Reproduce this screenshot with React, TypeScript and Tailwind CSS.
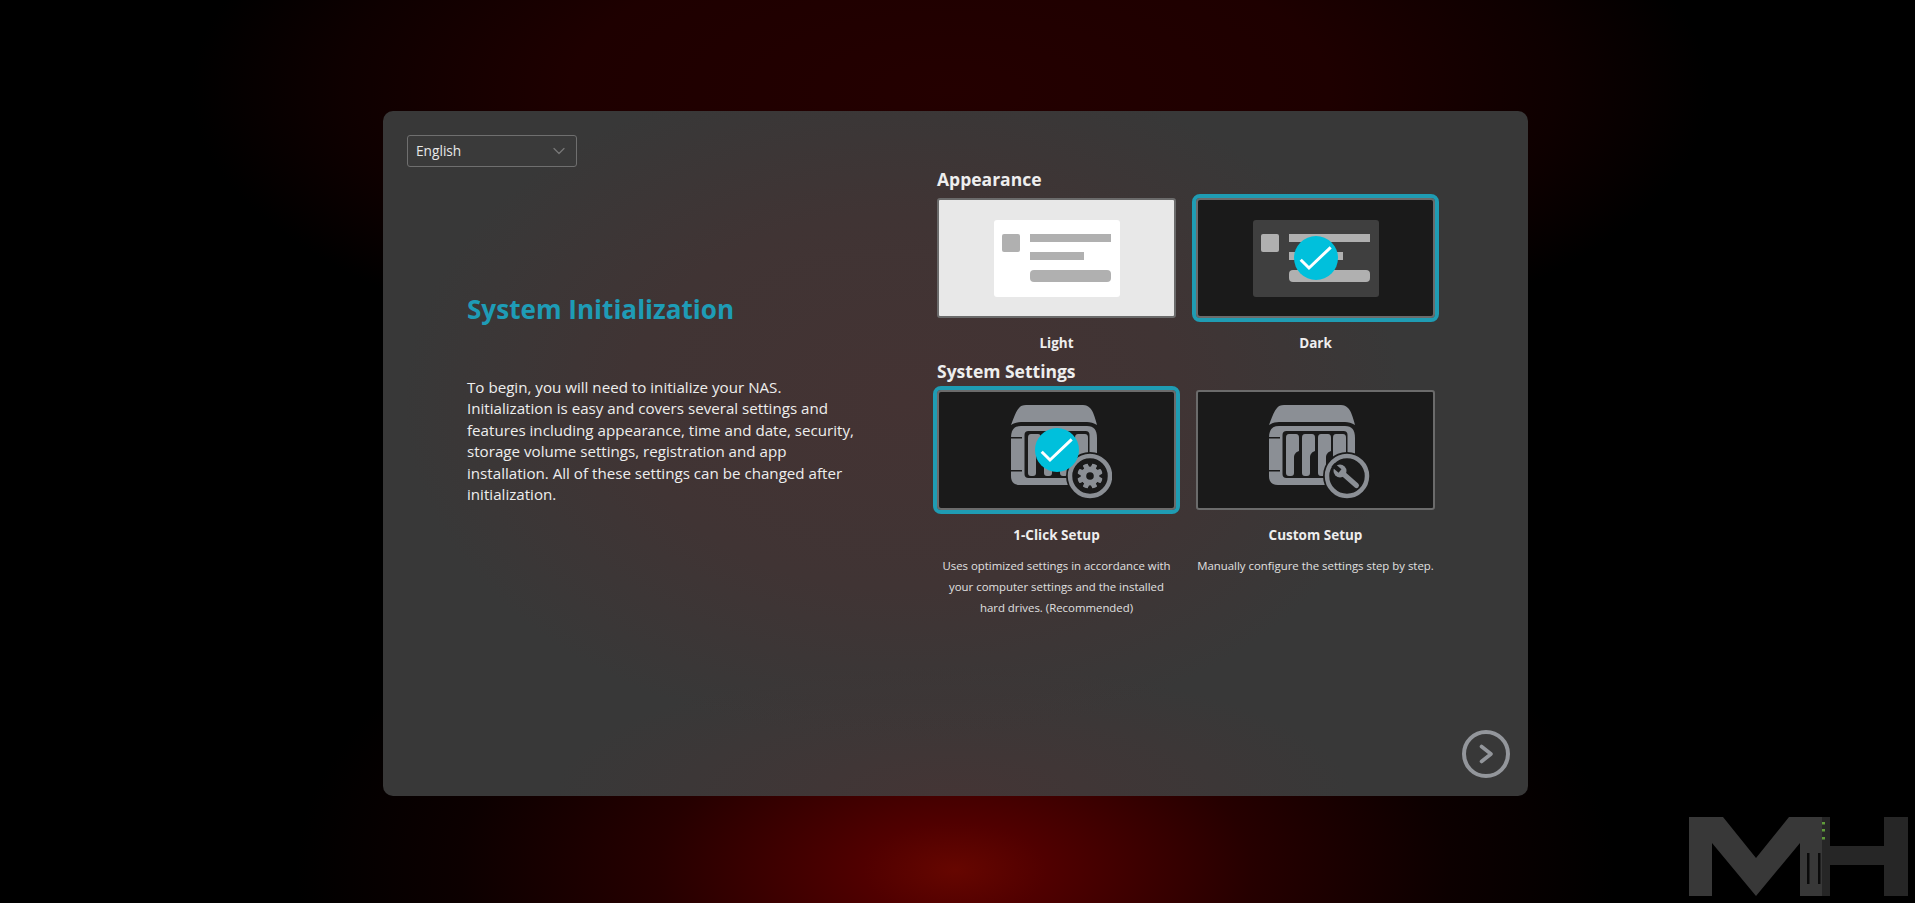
import React from 'react';
import { ChevronDown } from 'lucide-react';

const font = { fontFamily: '"Open Sans", "Noto Sans", sans-serif' };

const CheckBadge = () => (
  <div className="absolute left-1/2 top-1/2 -translate-x-1/2 -translate-y-1/2 w-11 h-11 rounded-full bg-[#00c0dc]">
    <svg width="44" height="44" viewBox="0 0 44 44" fill="none">
      <path d="M6.7 23.7L15 32L36.7 11.3" stroke="#fff" strokeWidth="3" />
    </svg>
  </div>
);

const MiniCard = ({ dark }: { dark?: boolean }) => {
  const bar = 'bg-[#b0b0b0]';
  return (
    <div className={`w-[126px] h-[77px] rounded-[3px] flex pl-2 pt-3.5 ${dark ? 'bg-[#3f3f3f]' : 'bg-white'}`}>
      <div className={`w-[18px] h-[18px] rounded-[2px] ${bar}`} />
      <div className="ml-2.5 flex flex-col">
        <div className={`w-[81px] h-2 ${bar}`} />
        <div className={`w-[54px] h-2 mt-2.5 ${bar}`} />
        <div className={`w-[81px] h-3 mt-2.5 rounded-[4px] ${bar}`} />
      </div>
    </div>
  );
};

const NasIcon = ({ tool }: { tool: 'gear' | 'wrench' }) => {
  const gray = '#8b8f95';
  const dark = '#1a1a1a';
  const cx = tool === 'gear' ? 88 : 92;
  const cy = 86;
  const bays = [31, 47, 63, 78];
  const vw = tool === 'gear' ? 110 : 122;
  return (
    <svg width={vw} height="120" viewBox={`0 0 ${vw} 120`}>
      <g transform={tool === 'gear' ? 'translate(-5 0)' : undefined}>
        <path d="M14 35C17 27 19 21 22 18C23 16 26 15 29 15H86C89 15 91 16 93 18C96 21 98 27 100 35C97 33 93 32 90 32H24C21 32 17 33 14 35Z" fill={gray} />
        <path d="M14 48V86C14 92 17 95 23 95H91C97 95 100 92 100 86V48C100 40 97 36 90 36H24C17 36 14 40 14 48Z" fill={gray} />
        <rect x="14" y="47" width="11" height="1.5" fill={dark} />
        <rect x="14" y="80" width="11" height="1.5" fill={dark} />
        <rect x="27.5" y="41" width="65" height="47" rx="4" fill={dark} />
        {bays.map((x, i) => (
          <path
            key={x}
            d={i === 3
              ? `M${x} 48C${x} 45 ${x + 1} 44 ${x + 3} 44H${x + 10}C${x + 12} 44 ${x + 13} 45 ${x + 13} 48V70H${x}Z`
              : `M${x} 48C${x} 45 ${x + 1} 44 ${x + 3} 44H${x + 10}C${x + 12} 44 ${x + 13} 45 ${x + 13} 48V61C${x + 10} 62 ${x + 8} 64 ${x + 8} 68V83C${x + 8} 85 ${x + 7} 86 ${x + 5} 86H${x + 3}C${x + 1} 86 ${x} 85 ${x} 83Z`}
            fill={gray}
          />
        ))}
      </g>
      <circle cx={cx} cy={cy} r="24" fill={dark} />
      <circle cx={cx} cy={cy} r="20" fill={dark} stroke={gray} strokeWidth="4.5" />
      {tool === 'gear' ? (
        <g fill={gray}>
          {[0, 45, 90, 135, 180, 225, 270, 315].map((a) => (
            <rect key={a} x={cx - 2.5} y={cy - 12.5} width="5" height="25" rx="1" transform={`rotate(${a + 22.5} ${cx} ${cy})`} />
          ))}
          <circle cx={cx} cy={cy} r="9.5" />
          <circle cx={cx} cy={cy} r="3.8" fill={dark} />
        </g>
      ) : (
        <g>
          <path d={`M${cx - 7} ${cy - 5}L${cx + 9.5} ${cy + 9.5}`} stroke={gray} strokeWidth="5" strokeLinecap="round" />
          <circle cx={cx - 7} cy={cy - 5} r="6.5" fill={gray} />
          <path d={`M${cx - 7} ${cy - 5}L${cx - 14} ${cy - 11}`} stroke={dark} strokeWidth="4.5" />
        </g>
      )}
    </svg>
  );
};

const OptionCard = ({ selected, light, children }: { selected?: boolean; light?: boolean; children: React.ReactNode }) => (
  <div
    className={`relative w-[239px] h-[120px] border-2 border-[#6b6b6b] flex items-center justify-center ${
      light ? 'bg-[#e8e8e8]' : 'bg-[#1a1a1a]'
    } ${selected ? 'rounded-[4px] outline-4 outline-[#1f9cb3]' : 'rounded-[3px]'}`}
  >
    {children}
    {selected && <CheckBadge />}
  </div>
);

const Label = ({ children }: { children: React.ReactNode }) => (
  <div className="mt-[15px] text-[13.5px] leading-5 font-bold text-[#eeeeee] text-center">{children}</div>
);

const Heading = ({ children }: { children: React.ReactNode }) => (
  <h2 className="text-[17.5px] leading-6 font-bold text-[#eeeeee]">{children}</h2>
);

export default function App() {
  return (
    <div
      className="relative w-full h-[903px] overflow-hidden pl-[383px] pt-[111px] bg-black bg-[radial-gradient(ellipse_660px_340px_at_955px_870px,#660600_0%,#500000_14%,#260000_45%,#0c0000_75%,transparent_100%),radial-gradient(ellipse_760px_300px_at_950px_90px,#240000_0%,#1e0000_50%,#0e0000_80%,transparent_100%)]"
      style={font}
    >
      <div className="relative w-[1145px] h-[685px] rounded-[10px] bg-[#383838] bg-[radial-gradient(ellipse_500px_340px_at_520px_290px,#443333_0%,#403434_55%,transparent_100%),radial-gradient(ellipse_400px_130px_at_570px_685px,#443535_0%,transparent_100%)] text-white">
        <div className="absolute left-6 top-6 w-[170px] h-8 rounded-[3px] border border-[#6f6f6f] bg-[#3a3a3a] flex items-center justify-between pl-2 pr-[7px] text-[13.7px] text-[#e8e8e8]">
          <span className="pt-px">English</span>
          <ChevronDown size={20} strokeWidth={1.5} className="text-[#777777]" />
        </div>

        <div className="flex">
          <div className="w-[470px] ml-[84px] pt-[180px]">
            <h1 className="text-[26.1px] leading-9 font-bold text-[#1e9cb6]">System Initialization</h1>
            <p className="mt-[50px] w-[395px] text-[15.15px] leading-[21.4px] text-[#eeeeee]">
              To begin, you will need to initialize your NAS. Initialization is easy and covers several settings and
              features including appearance, time and date, security, storage volume settings, registration and app
              installation. All of these settings can be changed after initialization.
            </p>
          </div>

          <div className="pt-14">
            <Heading>Appearance</Heading>
            <div className="grid grid-cols-[239px_239px] gap-x-5 mt-[7px]">
              <OptionCard light><MiniCard /></OptionCard>
              <OptionCard selected><MiniCard dark /></OptionCard>
              <Label>Light</Label>
              <Label>Dark</Label>
            </div>
            <div className="mt-1.5"><Heading>System Settings</Heading></div>
            <div className="grid grid-cols-[239px_239px] gap-x-5 mt-[7px]">
              <OptionCard selected><NasIcon tool="gear" /></OptionCard>
              <OptionCard><NasIcon tool="wrench" /></OptionCard>
              <Label>1-Click Setup</Label>
              <Label>Custom Setup</Label>
              <p className="mt-2.5 text-[11.4px] leading-[21px] text-[#e0e0e0] text-center">
                Uses optimized settings in accordance with your computer settings and the installed hard drives. (Recommended)
              </p>
              <p className="mt-2.5 text-[11.4px] leading-[21px] text-[#e0e0e0] text-center whitespace-nowrap">
                Manually configure the settings step by step.
              </p>
            </div>
          </div>
        </div>

        <button aria-label="Next" className="absolute right-[18px] bottom-[18px] w-12 h-12 rounded-full border-4 border-[#93969b] flex items-center justify-center">
          <svg width="20" height="20" viewBox="0 0 20 20" fill="none">
            <path d="M5.5 2.5L15 10L5.5 17.5" stroke="#93969b" strokeWidth="3.6" strokeLinecap="round" strokeLinejoin="round" />
          </svg>
        </button>
      </div>

      {/* watermark */}
      <svg className="absolute left-[1689px] top-[817px]" width="220" height="79" viewBox="0 0 220 79">
        <path d="M0 0H34L67 41L100 0H133V79H111V26L67 79L23 26V79H0Z" fill="#383838" />
        <rect x="133" y="0" width="8" height="79" fill="#262626" />
        <path d="M141 29H195V0H219V79H195V48H141Z" fill="#262626" />
        <rect x="118" y="36" width="2.5" height="31" fill="#0a0a0a" />
        <rect x="129" y="36" width="2.5" height="31" fill="#0a0a0a" />
        <rect x="133" y="5" width="3" height="2.5" fill="#5f9a3a" />
        <rect x="133" y="12" width="3" height="2.5" fill="#5f9a3a" />
        <rect x="133" y="20" width="3" height="2.5" fill="#5f9a3a" />
      </svg>
    </div>
  );
}
